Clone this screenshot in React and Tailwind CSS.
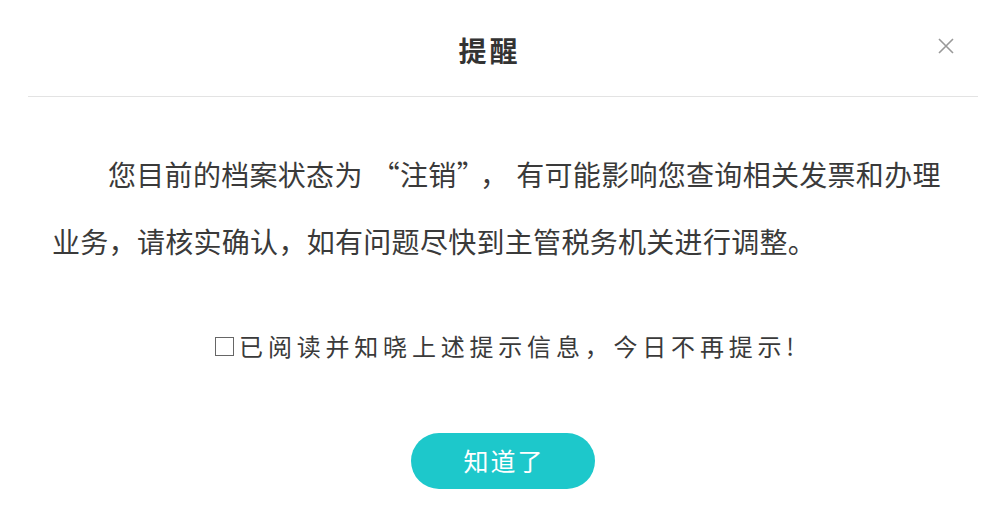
import React, { useState } from 'react'

const FONT = '"Microsoft YaHei", "Noto Sans CJK SC", "Noto Sans", sans-serif'

const App = () => {
  const [checked, setChecked] = useState(false)

  return (
    <div
      className="w-[992px] h-[532px] bg-white overflow-hidden text-[#333]"
      style={{ fontFamily: FONT }}
    >
      {/* header */}
      <div className="grid grid-cols-[1fr_auto_1fr] items-center h-[96px] pr-[16px]">
        <div />
        <div className="text-[28px] font-bold tracking-[3px] text-[#333] leading-none pl-[3px] pt-[4px]">提醒</div>
        <div className="flex justify-end pr-[21px] pb-[4px]">
          <button className="text-[#999] hover:text-[#666]">
            <svg width="18" height="18" viewBox="0 0 18 18" fill="none" stroke="currentColor" strokeWidth="1.6">
              <path d="M2 2 L16 16 M16 2 L2 16" />
            </svg>
          </button>
        </div>
      </div>
      <div className="ml-[28px] mr-[14px] h-px bg-[#e3e3e3]" />

      <div className="ml-[28px] mr-[14px]">
        {/* body */}
        <div className="pl-[24px] mt-[44px]">
          <p className="text-[28px] leading-[67px] tracking-[0.3px] text-[#3a3a3a] indent-[56px] whitespace-nowrap">
            您目前的档案状态为<span className="ml-[9px]">“</span>注销<span className="mr-[9px]">”</span>，<span className="ml-[8px]">有可能影响您查询相关发票和办理</span>
            <br />
            业务，请核实确认，如有问题尽快到主管税务机关进行调整。
          </p>
        </div>

        <label className="mt-[56px] pl-[8px] flex items-center justify-center gap-[5px] h-[30px] cursor-pointer select-none">
          <span
            onClick={() => setChecked(!checked)}
            className="w-[19px] h-[19px] border-[1.5px] border-[#666] bg-white flex items-center justify-center"
          >
            {checked && <span className="w-[9px] h-[9px] bg-[#1dc8cb]" />}
          </span>
          <span className="text-[24px] tracking-[4.8px] text-[#3a3a3a]">已阅读并知晓上述提示信息，今日不再提示!</span>
        </label>

        <div className="flex justify-center mt-[72px]">
          <button className="w-[184px] h-[56px] rounded-full bg-[#1dc8cb] text-white text-[25px] tracking-[2px] pl-[2px]">
            知道了
          </button>
        </div>
      </div>
    </div>
  )
}

export default App
